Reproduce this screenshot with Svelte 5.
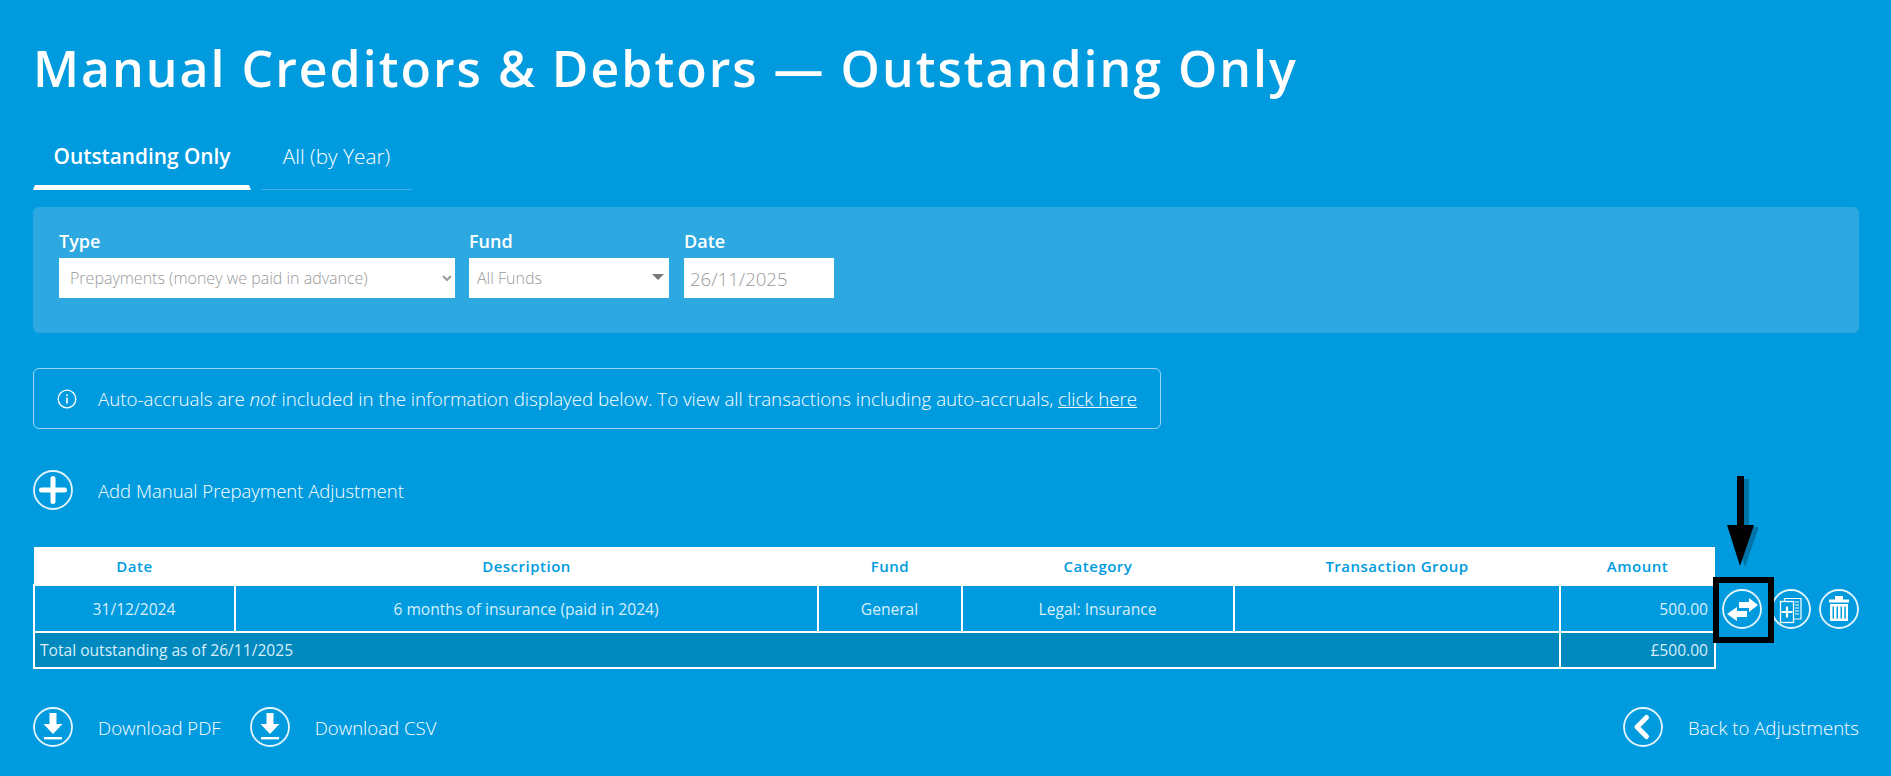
<script>
  const columns = ['Date', 'Description', 'Fund', 'Category', 'Transaction Group', 'Amount'];
  const rows = [
    { date: '31/12/2024', description: '6 months of insurance (paid in 2024)', fund: 'General', category: 'Legal: Insurance', group: '', amount: '500.00' }
  ];
</script>

<div class="page">
  <h1>Manual Creditors &amp; Debtors — Outstanding Only</h1>

  <div class="tabs">
    <div class="tab active">Outstanding Only</div>
    <div class="tab">All (by Year)</div>
  </div>

  <div class="filters">
    <div class="field">
      <label for="type">Type</label>
      <select id="type" class="type-select">
        <option>Prepayments (money we paid in advance)</option>
      </select>
    </div>
    <div class="field">
      <label for="fund">Fund</label>
      <div class="fund-wrap">
        <select id="fund" class="fund-select">
          <option>All Funds</option>
        </select>
        <span class="caret"></span>
      </div>
    </div>
    <div class="field">
      <label for="date">Date</label>
      <input id="date" class="date-input" value="26/11/2025" />
    </div>
  </div>

  <div class="notice">
    <svg class="info" viewBox="0 0 20 20" width="20" height="20">
      <circle cx="10" cy="10" r="8.8" fill="none" stroke="#fff" stroke-width="1.3" />
      <rect x="9.2" y="8.6" width="1.6" height="6" fill="#fff" />
      <rect x="9.2" y="5.4" width="1.6" height="1.7" fill="#fff" />
    </svg>
    <span>Auto-accruals are <em>not</em> included in the information displayed below. To view all transactions including auto-accruals, <a href="#top">click here</a></span>
  </div>

  <div class="link-row add">
    <svg class="round" viewBox="0 0 40 40">
      <circle cx="20" cy="20" r="19" />
      <path d="M20 8.5v23M8.5 20h23" stroke="#fff" stroke-width="5" stroke-linecap="round" fill="none" />
    </svg>
    <span>Add Manual Prepayment Adjustment</span>
  </div>

  <div class="table-row">
    <table>
      <colgroup>
        <col style="width: 201px" />
        <col style="width: 583px" />
        <col style="width: 144px" />
        <col style="width: 272px" />
        <col style="width: 326px" />
        <col style="width: 155px" />
      </colgroup>
      <thead>
        <tr>
          {#each columns as col}
            <th>{col}</th>
          {/each}
        </tr>
      </thead>
      <tbody>
        {#each rows as row}
          <tr>
            <td>{row.date}</td>
            <td>{row.description}</td>
            <td>{row.fund}</td>
            <td>{row.category}</td>
            <td>{row.group}</td>
            <td class="num">{row.amount}</td>
          </tr>
        {/each}
        <tr class="total">
          <td colspan="5" class="left">Total outstanding as of 26/11/2025</td>
          <td class="num">£500.00</td>
        </tr>
      </tbody>
    </table>

    <div class="actions">
      <svg class="round" viewBox="0 0 40 40">
        <circle cx="20" cy="20" r="19" />
        <path d="M17 13h10V9l9 7-9 7v-4H17z" fill="#fff" />
        <path d="M25 22H15v-4L5 25l10 7v-4h10z" fill="#fff" />
      </svg>
      <svg class="round" viewBox="0 0 40 40">
        <circle cx="20" cy="20" r="19" />
        <path d="M13.500 12V9.500H30v20.500h-7" fill="none" stroke="#fff" stroke-width="1.200" />
        <path d="M24 13h4M24 16h4M24 19h4M24 22h4M24 25h4" stroke="#fff" stroke-width="1" fill="none" />
        <rect x="9.500" y="12.500" width="13" height="21" fill="none" stroke="#fff" stroke-width="1.300" />
        <path d="M16 17.500v11M10.500 23h11" stroke="#fff" stroke-width="2.200" fill="none" />
      </svg>
      <svg class="round" viewBox="0 0 40 40">
        <circle cx="20" cy="20" r="19" />
        <path d="M16 7h8v3.500h6v3H10v-3h6z" fill="#fff" />
        <path fill-rule="evenodd" d="M11 15h18v17H11zM13.500 17.500v12h1.500v-12zM17.500 17.500v12h1.500v-12zM21.500 17.500v12h1.500v-12zM25.300 17.500v12h1.500v-12z" fill="#fff" />
      </svg>
    </div>
  </div>

  <div class="footer">
    <div class="downloads">
      <div class="link-row">
        <svg class="round" viewBox="0 0 40 40">
          <circle cx="20" cy="20" r="19" />
          <path d="M16.500 6h7v11h6L20 27 10.500 17h6z" fill="#fff" />
          <rect x="11" y="30" width="18" height="2.400" fill="#fff" />
        </svg>
        <span>Download PDF</span>
      </div>
      <div class="link-row">
        <svg class="round" viewBox="0 0 40 40">
          <circle cx="20" cy="20" r="19" />
          <path d="M16.500 6h7v11h6L20 27 10.500 17h6z" fill="#fff" />
          <rect x="11" y="30" width="18" height="2.400" fill="#fff" />
        </svg>
        <span>Download CSV</span>
      </div>
    </div>
    <div class="link-row">
      <svg class="round" viewBox="0 0 40 40">
        <circle cx="20" cy="20" r="19" />
        <path d="M23.500 10.500 14 20l9.500 9.500" fill="none" stroke="#fff" stroke-width="5" stroke-linecap="round" stroke-linejoin="round" />
      </svg>
      <span>Back to Adjustments</span>
    </div>
  </div>

  <!-- annotation drawn over the screenshot -->
  <div class="callout-box"></div>
  <svg class="callout-arrow" viewBox="0 0 32 92" width="32" height="92">
    <path d="M13 2h7v48h10L16 90 3 50h10z" fill="#000" opacity="0.25" transform="translate(3 1)" />
    <path d="M11 0h7v49h10L14 90 1 49h10z" fill="#000" />
  </svg>
</div>

<style>
  :global(body) {
    margin: 0;
    background: #009bdf;
  }

  .page {
    position: relative;
    box-sizing: border-box;
    height: 776px;
    padding: 0 32px 0 33px;
    color: #fff;
    font-family: "Open Sans", sans-serif;
    font-weight: 300;
    overflow: hidden;
  }

  h1 {
    margin: 0;
    padding-top: 35px;
    font-size: 50px;
    line-height: 66px;
    font-weight: 600;
    letter-spacing: 2px;
  }

  .tabs {
    display: flex;
    gap: 10px;
    margin-top: 30px;
  }

  .tab {
    width: 151px;
    height: 59px;
    box-sizing: border-box;
    text-align: center;
    font-size: 20.8px;
    line-height: 50px;
    border-bottom: 1px solid #3fb0ea;
  }

  .tab.active {
    width: 218px;
    height: 62px;
    margin-top: -3px;
    padding-top: 3px;
    border-bottom: 5px solid #fff;
    border-left: 2px solid transparent;
    border-right: 2px solid transparent;
    font-weight: 600;
  }

  .filters {
    display: flex;
    gap: 14px;
    height: 126px;
    box-sizing: border-box;
    margin-top: 17px;
    padding: 22px 26px;
    background: #2ea8e0;
    border-radius: 6px;
  }

  .field {
    display: flex;
    flex-direction: column;
  }

  label {
    margin-bottom: 5px;
    font-size: 18px;
    line-height: 24px;
    font-weight: 600;
  }

  select,
  input {
    box-sizing: border-box;
    height: 40px;
    border: none;
    border-radius: 0;
    background: #fff;
    color: #999;
    font-family: "Open Sans", sans-serif;
    font-size: 16px;
    font-weight: 300;
    outline: none;
  }

  .type-select {
    width: 396px;
    padding-left: 7px;
  }

  .fund-wrap {
    position: relative;
    margin-right: 1px;
  }

  .fund-select {
    display: block;
    width: 200px;
    padding-left: 8px;
    appearance: none;
  }

  .caret {
    position: absolute;
    top: 16px;
    right: 5px;
    border-left: 6px solid transparent;
    border-right: 6px solid transparent;
    border-top: 6px solid #777;
  }

  .date-input {
    width: 150px;
    padding-left: 6px;
    font-size: 18.6px;
  }

  .notice {
    display: flex;
    align-items: center;
    gap: 21px;
    box-sizing: border-box;
    width: 1128px;
    height: 61px;
    margin-top: 35px;
    padding-left: 23px;
    border: 1px solid #9ad6f3;
    border-radius: 6px;
    font-size: 18.72px;
  }

  .info {
    flex: none;
  }

  .notice a {
    color: #fff;
  }

  .link-row {
    display: flex;
    align-items: center;
    gap: 25px;
    font-size: 18.6px;
  }

  .add {
    margin-top: 41px;
    font-size: 18.5px;
  }

  .round {
    flex: none;
    width: 40px;
    height: 40px;
  }

  .round circle {
    fill: none;
    stroke: #e4f5fd;
    stroke-width: 1.8;
  }

  .table-row {
    display: flex;
    gap: 6px;
    margin-top: 37px;
  }

  table {
    width: 1681px;
    table-layout: fixed;
    border-collapse: collapse;
    flex: none;
    font-size: 15.6px;
    font-weight: 400;
  }

  th {
    height: 37px;
    padding: 0;
    background: #fff;
    color: #009bdf;
    font-size: 15px;
    font-weight: 600;
    letter-spacing: 0.5px;
  }

  td {
    height: 45px;
    padding: 0 6px 0 5px;
    border: 2px solid #fff;
    text-align: center;
    color: #d6effb;
  }

  td.num {
    text-align: right;
  }

  td.left {
    text-align: left;
  }

  .total td {
    height: 34px;
    background: #0089bf;
  }

  .actions {
    display: flex;
    gap: 8.5px;
    margin-top: 42px;
    align-self: flex-start;
  }

  .footer {
    display: flex;
    justify-content: space-between;
    margin-top: 38px;
  }

  .downloads {
    display: flex;
    gap: 29px;
  }

  .callout-box {
    position: absolute;
    left: 1713px;
    top: 577px;
    width: 61px;
    height: 66px;
    box-sizing: border-box;
    border: 6px solid #000;
  }

  .callout-arrow {
    position: absolute;
    left: 1726px;
    top: 476px;
  }
</style>
